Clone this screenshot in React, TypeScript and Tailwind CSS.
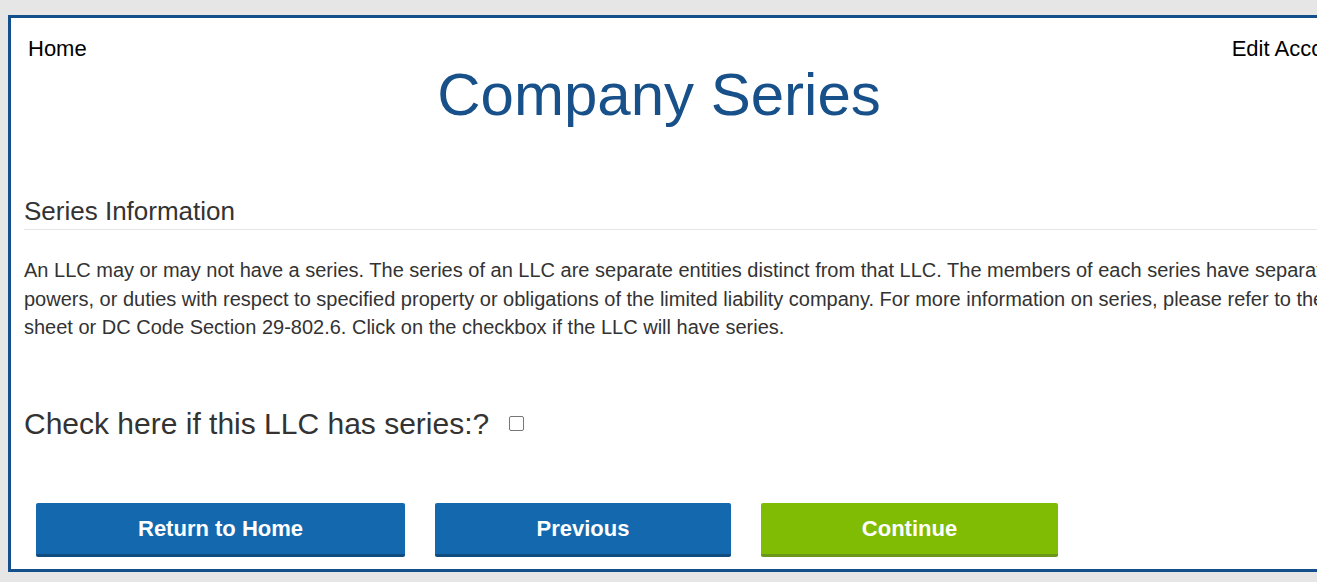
import React from 'react';

const App: React.FC = () => {
  return (
    <div className="w-full h-[582px] overflow-hidden bg-[#e6e6e6] pt-[15px] pl-[8px] font-['Liberation_Sans',Arial,sans-serif]">
      <div className="w-[1408px] bg-white border-[3px] border-[#13508b] pb-[12px]">
        <div className="flex justify-between pt-[18px] pl-[17px] pr-[59px] text-[22px] leading-[25px] text-black">
          <a href="#">Home</a>
          <a href="#">Edit Account</a>
        </div>
        <h1 className="w-[1296px] mt-[4px] text-center text-[60px] leading-none text-[#18518a]">Company Series</h1>

        <div className="px-[13px]">
          <h2 className="mt-[71px] pb-[3px] border-b border-[#e5e5e5] text-[26px] leading-[30px] text-[#333]">
            Series Information
          </h2>
          <p className="mt-[26px] text-[20px] leading-[28.5px] text-[#333]">
            An LLC may or may not have a series. The series of an LLC are separate entities distinct from that LLC. The members of each series have separate rights, powers, or duties with respect to specified property or obligations of the limited liability company. For more information on series, please refer to the fact sheet or DC Code Section 29-802.6. Click on the checkbox if the LLC will have series.
          </p>

          <div className="mt-[65px] flex items-center text-[30px] leading-[34px] text-[#333]">
            <label htmlFor="hasSeries">Check here if this LLC has series:?</label>
            <input id="hasSeries" type="checkbox" className="ml-[20px] w-[15px] h-[15px] appearance-none border border-[#767676] rounded-[2px] bg-white" />
          </div>

          <div className="mt-[62px] flex gap-[30px] pl-[12px]">
            <button className="w-[369px] h-[54px] rounded-[2px] bg-[#1469ae] border-b-[3px] border-[#0f4c80] text-white font-bold text-[22px]">
              Return to Home
            </button>
            <button className="w-[296px] h-[54px] rounded-[2px] bg-[#1469ae] border-b-[3px] border-[#0f4c80] text-white font-bold text-[22px]">
              Previous
            </button>
            <button className="w-[297px] h-[54px] rounded-[2px] bg-[#7fbc03] border-b-[3px] border-[#6a961a] text-white font-bold text-[22px]">
              Continue
            </button>
          </div>
        </div>
      </div>
    </div>
  );
};

export default App;
